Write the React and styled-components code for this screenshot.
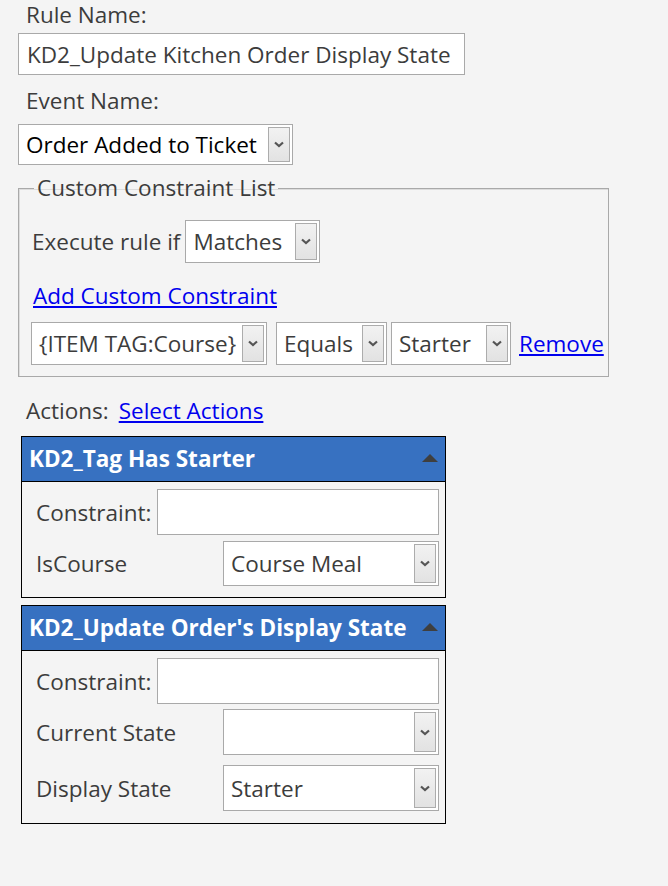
import styled, { createGlobalStyle } from "styled-components";

const GlobalStyle = createGlobalStyle`
  body {
    margin: 0;
    background: #f4f4f4;
    font-family: "Open Sans", "Noto Sans", sans-serif;
    color: #3c3c3c;
  }
`

const Page = styled.div`
  width: 668px;
  height: 886px;
  padding: 0 0 0 18px;
  box-sizing: border-box;
  display: flex;
  flex-direction: column;
  align-items: flex-start;
  font-size: 22.5px;
`

const Label = styled.div`
  font-size: 22.5px;
  line-height: 30px;
  color: #3c3c3c;
  margin: ${p => p.$margin || "0 0 0 8px"};
  white-space: nowrap;
`

const TextBox = styled.div`
  width: ${p => p.$width || "447px"};
  height: ${p => p.$height || "42px"};
  box-sizing: border-box;
  background: #fff;
  border: 1px solid #a9a9a9;
  display: flex;
  align-items: center;
  padding: 0 8px;
  margin: ${p => p.$margin || "0"};
  color: #3c3c3c;
  font-size: 22.5px;
  white-space: nowrap;
  flex: ${p => p.$grow ? "1" : "none"};
`

const SelectBox = styled.div`
  width: ${p => p.$width};
  height: ${p => p.$height || "43px"};
  box-sizing: border-box;
  background: #fff;
  border: 1px solid #a9a9a9;
  display: flex;
  align-items: stretch;
  padding: 2px;
  margin: ${p => p.$margin || "0"};
  flex: ${p => p.$grow ? "1" : "none"};
`

const SelectText = styled.div`
  flex: 1;
  display: flex;
  align-items: center;
  padding-left: 5px;
  color: ${p => p.$color || "#3c3c3c"};
  font-size: 22.5px;
  white-space: nowrap;
  overflow: hidden;
`

const DropButton = styled.div`
  width: 22px;
  box-sizing: border-box;
  border: 1px solid #acacac;
  background: linear-gradient(#f2f2f2, #e2e2e2);
  display: flex;
  align-items: center;
  justify-content: center;
`

const FieldSet = styled.fieldset`
  width: 591px;
  min-width: 0;
  box-sizing: border-box;
  margin: 8px 0 0 0;
  padding: 0 4px 11px 12px;
  border: 1px solid #a9a9a9;
  box-shadow: inset 1px 1px 0 #dcdcdc;
  display: flex;
  flex-direction: column;
  align-items: flex-start;
`

const Legend = styled.legend`
  font-size: 22.5px;
  line-height: 30px;
  color: #3c3c3c;
  padding: 0 3px;
  margin-left: 3px;
`

const Line = styled.div`
  display: flex;
  align-items: center;
  gap: ${p => p.$gap || "6px"};
  margin: ${p => p.$margin || "0"};
`

const Link = styled.a`
  color: #0000ee;
  text-decoration: underline;
  font-size: 22.5px;
  line-height: 30px;
  white-space: nowrap;
  cursor: pointer;
  margin: ${p => p.$margin || "0"};
`

const Panel = styled.div`
  width: 425px;
  box-sizing: border-box;
  border: 1px solid #000;
  margin: ${p => p.$margin || "0 0 0 3px"};
  background: #f4f4f4;
`

const PanelHeader = styled.div`
  height: 45px;
  background: #3771c1;
  border-bottom: 1px solid #000;
  display: flex;
  align-items: center;
  justify-content: space-between;
  padding: 0 7px 1px 7px;
  box-sizing: border-box;
  color: #fff;
  font-weight: 700;
  font-size: 22.5px;
  white-space: nowrap;
`

const Caret = styled.div`
  width: 0;
  height: 0;
  border-left: 8px solid transparent;
  border-right: 8px solid transparent;
  border-bottom: 8px solid #3f3f3f;
  margin-top: -2px;
`

const PanelBody = styled.div`
  display: flex;
  flex-direction: column;
  gap: ${p => p.$gap || "6px"};
  padding: 7px 6px ${p => p.$bottom || "11px"} 14px;
`

const FieldRow = styled.div`
  display: flex;
  align-items: center;
  margin: ${p => p.$margin || "0"};
`

const FieldLabel = styled.div`
  width: ${p => p.$width || "auto"};
  flex: none;
  font-size: 22.5px;
  color: #3c3c3c;
  white-space: nowrap;
`

function Chevron() {
  return (
    <svg width="10" height="7" viewBox="0 0 10 7">
      <path d="M1 1.5 L5 5 L9 1.5" fill="none" stroke="#555" strokeWidth="2.2"/>
    </svg>
  )
}

function Select({ value, width, height, color, grow, margin }) {
  return (
    <SelectBox $width={width} $height={height} $grow={grow} $margin={margin}>
      <SelectText $color={color}>{value}</SelectText>
      <DropButton><Chevron/></DropButton>
    </SelectBox>
  )
}

function App() {
  return (
    <>
      <GlobalStyle/>
      <Page>
        <Label>Rule Name:</Label>
        <TextBox $margin="3px 0 0 0">KD2_Update Kitchen Order Display State</TextBox>
        <Label $margin="11px 0 0 8px">Event Name:</Label>
        <Line $margin="8px 0 0 0">
          <Select value="Order Added to Ticket" width="275px" height="41px" color="#000"/>
        </Line>
        <FieldSet>
          <Legend>Custom Constraint List</Legend>
          <Line $margin="17px 0 0 1px" $gap="5px">
            <Label $margin="0">Execute rule if</Label>
            <Select value="Matches" width="135px"/>
          </Line>
          <Line $margin="18px 0 0 2px">
            <Link>Add Custom Constraint</Link>
          </Line>
          <Line $margin="11px 0 0 0" $gap="0">
            <Select value="{ITEM TAG:Course}" width="236px"/>
            <Select value="Equals" width="111px" margin="0 0 0 9px"/>
            <Select value="Starter" width="120px" margin="0 0 0 4px"/>
            <Link $margin="0 0 0 8px">Remove</Link>
          </Line>
        </FieldSet>
        <Line $margin="19px 0 10px 8px" $gap="10px">
          <Label $margin="0">Actions:</Label>
          <Link>Select Actions</Link>
        </Line>
        <Panel>
          <PanelHeader>
            <span>KD2_Tag Has Starter</span>
            <Caret/>
          </PanelHeader>
          <PanelBody>
            <FieldRow>
              <FieldLabel $width="121px">Constraint:</FieldLabel>
              <TextBox $grow $height="46px"/>
            </FieldRow>
            <FieldRow>
              <FieldLabel $width="187px">IsCourse</FieldLabel>
              <Select value="Course Meal" grow height="45px"/>
            </FieldRow>
          </PanelBody>
        </Panel>
        <Panel $margin="7px 0 0 3px">
          <PanelHeader>
            <span>KD2_Update Order's Display State</span>
            <Caret/>
          </PanelHeader>
          <PanelBody $gap="5px" $bottom="12px">
            <FieldRow>
              <FieldLabel $width="121px">Constraint:</FieldLabel>
              <TextBox $grow $height="46px"/>
            </FieldRow>
            <FieldRow>
              <FieldLabel $width="187px">Current State</FieldLabel>
              <Select value="" grow height="46px"/>
            </FieldRow>
            <FieldRow $margin="5px 0 0 0">
              <FieldLabel $width="187px">Display State</FieldLabel>
              <Select value="Starter" grow height="46px"/>
            </FieldRow>
          </PanelBody>
        </Panel>
      </Page>
    </>
  )
}

export default App;
